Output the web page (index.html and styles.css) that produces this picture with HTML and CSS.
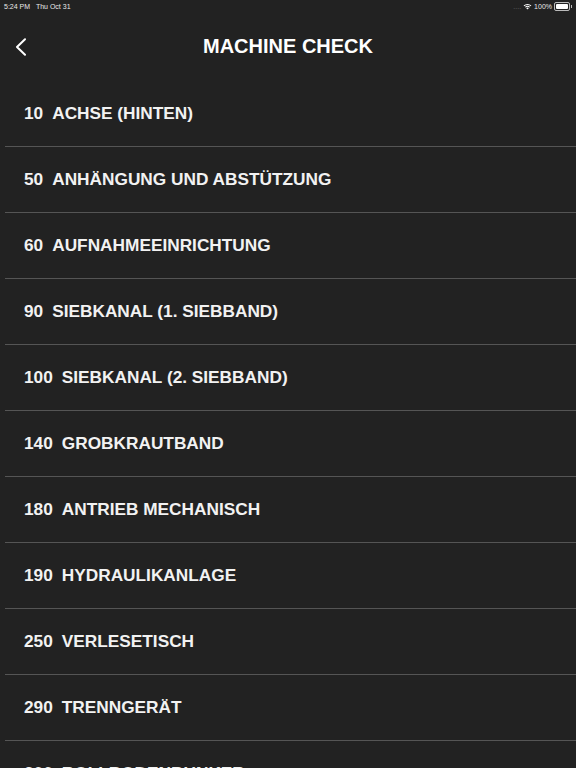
FILE: index.html
```html
<!DOCTYPE html>
<html>
<head>
<meta charset="utf-8">
<link rel="stylesheet" href="styles.css">
</head>
<body>
<div class="status">
  <div class="status-left">5:24 PM&nbsp;&nbsp;&nbsp;Thu Oct 31</div>
  <div class="status-right">
    <span class="dots">....</span>
    <svg class="wifi" width="9" height="7" viewBox="0 0 12 9"><path d="M6 8.6 L4.2 6.6 A2.6 2.6 0 0 1 7.8 6.6 Z" fill="#fff"/><path d="M2.6 5 A4.9 4.9 0 0 1 9.4 5 L8.5 5.9 A3.6 3.6 0 0 0 3.5 5.9 Z" fill="#fff"/><path d="M0.8 3.2 A7.5 7.5 0 0 1 11.2 3.2 L10.3 4.1 A6.2 6.2 0 0 0 1.7 4.1 Z" fill="#fff"/></svg>
    <span class="pct">100%</span>
    <span class="battery"><span class="battery-fill"></span></span><span class="battery-tip"></span>
  </div>
</div>
<header class="nav">
  <svg class="back" width="12" height="18" viewBox="0 0 12 18"><path d="M10 1.2 L2 9 L10 16.8" fill="none" stroke="#fff" stroke-width="2" stroke-linecap="round" stroke-linejoin="round"/></svg>
  <h1 class="title">MACHINE CHECK</h1>
</header>
<ul class="list">
  <li class="row"><span class="num">10</span>ACHSE (HINTEN)</li>
  <li class="row"><span class="num">50</span>ANHÄNGUNG UND ABSTÜTZUNG</li>
  <li class="row"><span class="num">60</span>AUFNAHMEEINRICHTUNG</li>
  <li class="row"><span class="num">90</span>SIEBKANAL (1. SIEBBAND)</li>
  <li class="row"><span class="num">100</span>SIEBKANAL (2. SIEBBAND)</li>
  <li class="row"><span class="num">140</span>GROBKRAUTBAND</li>
  <li class="row"><span class="num">180</span>ANTRIEB MECHANISCH</li>
  <li class="row"><span class="num">190</span>HYDRAULIKANLAGE</li>
  <li class="row"><span class="num">250</span>VERLESETISCH</li>
  <li class="row"><span class="num">290</span>TRENNGERÄT</li>
  <li class="row"><span class="num">300</span>ROLLBODENBUNKER</li>
</ul>
</body>
</html>
```
FILE: styles.css
```css
html, body {
  margin: 0;
  padding: 0;
  background: #222222;
  height: 768px;
  overflow: hidden;
}
body {
  font-family: "Liberation Sans", Arial, sans-serif;
  color: #ffffff;
}
.status {
  height: 12px;
  display: flex;
  justify-content: space-between;
  align-items: center;
  padding: 0 4px 0 4px;
  font-size: 7px;
  color: #e8e8e8;
}
.status-left {
  padding-top: 1px;
}
.status-right {
  display: flex;
  align-items: center;
  gap: 2px;
}
.dots {
  color: #666;
  font-size: 7px;
}
.pct {
  font-size: 7px;
}
.battery {
  width: 12px;
  height: 5px;
  border: 1px solid #bbb;
  border-radius: 2px;
  padding: 1px;
  display: flex;
}
.battery-fill {
  flex: 1;
  background: #fff;
  border-radius: 1px;
}
.battery-tip {
  width: 1px;
  height: 3px;
  background: #bbb;
  margin-left: -1px;
}
.nav {
  height: 69px;
  display: flex;
  align-items: center;
  justify-content: center;
  position: relative;
}
.back {
  position: absolute;
  left: 15px;
  top: 26px;
}
.title {
  margin: 0;
  font-size: 20px;
  font-weight: bold;
}
.list {
  list-style: none;
  margin: 0 0 0 5px;
  padding: 0;
}
.row {
  height: 65px;
  border-bottom: 1px solid #555555;
  display: flex;
  align-items: center;
  padding-left: 19px;
  font-size: 17.25px;
  font-weight: bold;
  color: #f2f2f2;
}
.num {
  margin-right: 9px;
}
```
